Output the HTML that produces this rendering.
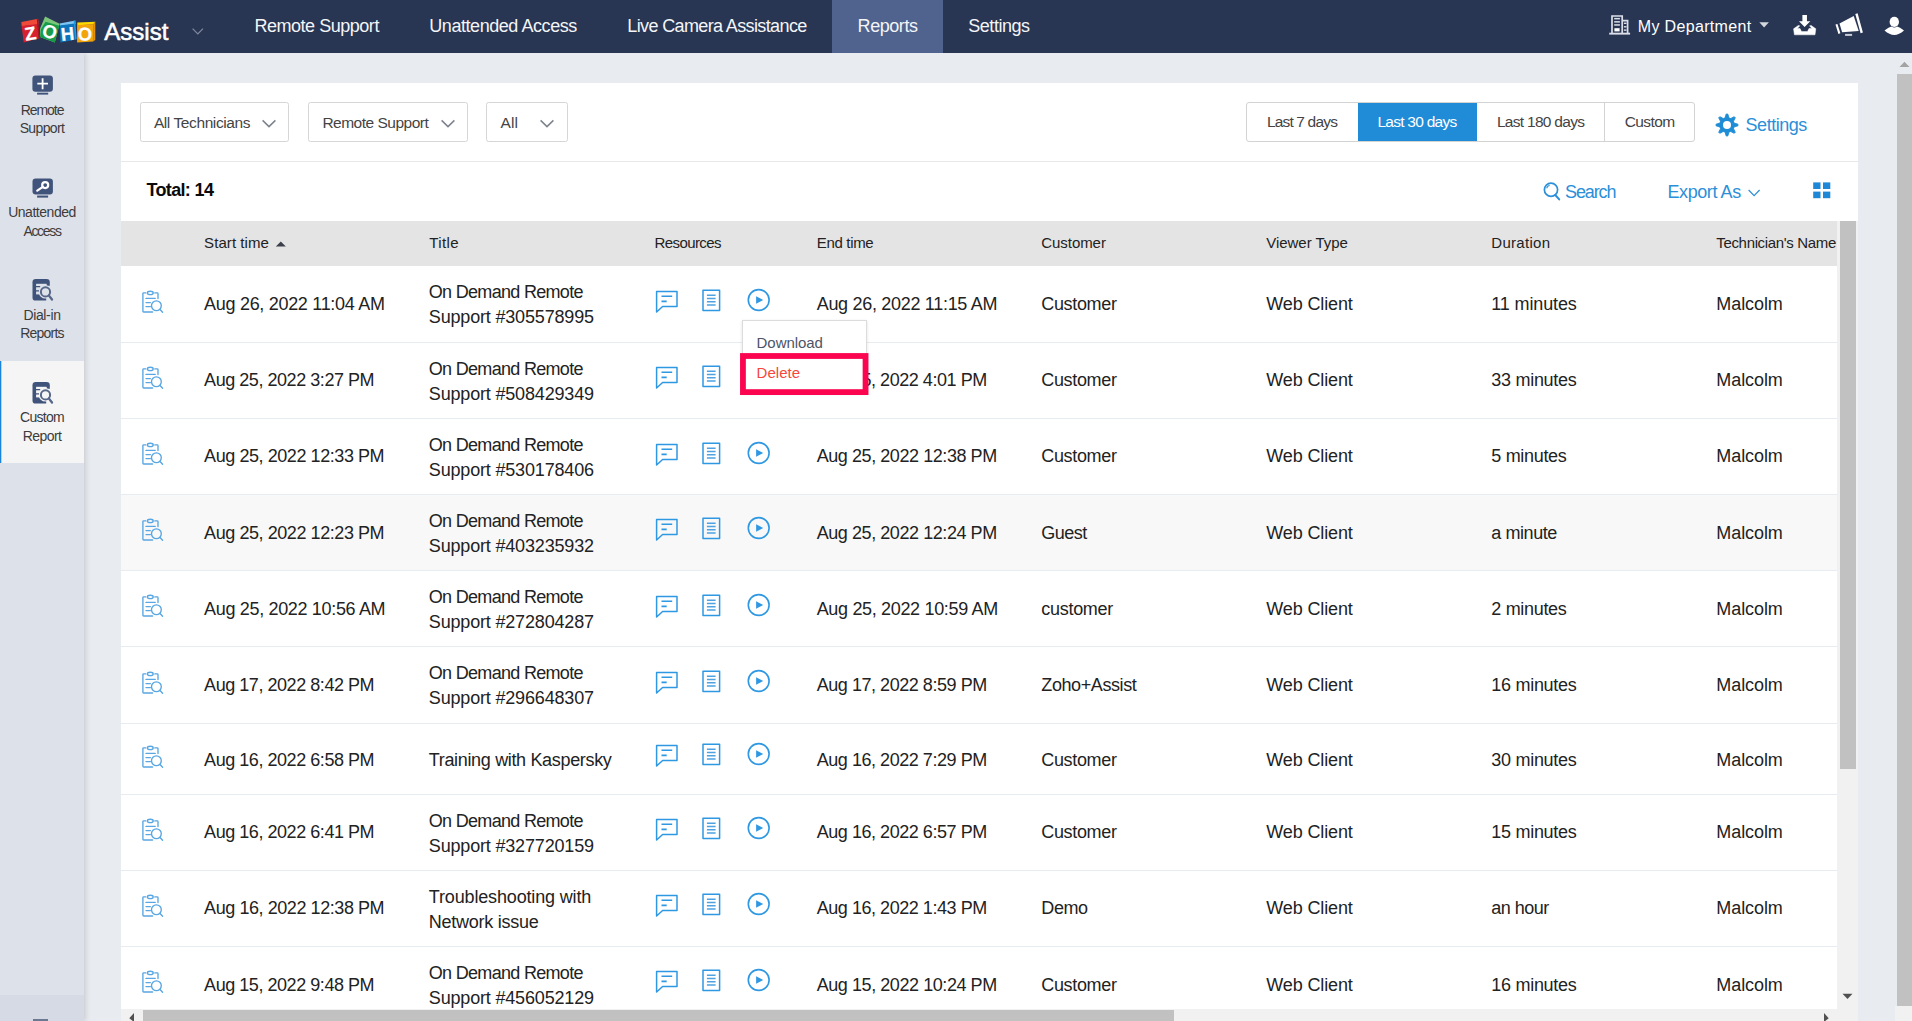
<!DOCTYPE html><html><head><meta charset="utf-8"><title>Zoho Assist - Reports</title><style>
*{box-sizing:border-box;margin:0;padding:0}
html,body{width:1912px;height:1021px;overflow:hidden;background:#e8ebf0;font-family:'Liberation Sans',sans-serif;color:#222}
.abs{position:absolute}
span{white-space:pre}
#nav{position:absolute;left:0;top:0;width:1912px;height:53px;background:#283553;z-index:5}
.ni{position:absolute;top:0;height:53px;line-height:53px;font-size:18px;color:#f4f5f7;white-space:nowrap}
#side{position:absolute;left:0;top:53px;width:84px;height:968px;background:#dde1ea;box-shadow:1px 0 6px rgba(0,0,0,.17);z-index:4}
.si{position:absolute;left:0;width:84px;text-align:center;font-size:14px;line-height:18.5px;color:#333}
.si svg{position:absolute;left:0;top:0}
.sl{position:absolute;left:0;width:84px;text-align:center;white-space:nowrap}
#panel{position:absolute;left:121px;top:83px;width:1737px;height:938px;background:#fff}
.sel{position:absolute;top:102px;height:40px;border:1px solid #d6d6d6;border-radius:2.5px;background:#fff;font-size:15.5px;color:#444;line-height:39px}
.t{position:absolute;white-space:nowrap}
.rng{position:absolute;top:103px;height:40px;line-height:38px;font-size:15.5px;color:#444;text-align:left}
.th{position:absolute;top:220.2px;height:45px;line-height:45px;font-size:15px;color:#222;white-space:nowrap}
.row{position:absolute;left:121px;width:1716px;border-bottom:1px solid #e6ecef;background:#fff}
.c{position:absolute;font-size:18px;line-height:25px;color:#222;white-space:nowrap}
</style></head><body>
<div id="nav">
<svg class="abs" style="left:15px;top:10px" width="90" height="38" viewBox="0 0 90 38">
<polygon points="6.4,12 23.1,8.7 23.6,14.5 6.7,16.3" fill="#ef4a37"/>
<polygon points="6.6,16 22.8,14.1 24.6,28.2 8.7,32.5" fill="#d7202f"/>
<polygon points="21.8,9 23.2,8.7 24.8,28.1 23.4,28.6" fill="#a5141f"/>
<polygon points="30.1,6.6 44.5,13.7 39.8,32.5 25,27.1 25,18.8" fill="#7cc67a"/>
<polygon points="30.6,11.8 44.3,15.7 39.8,32.5 25,27.1 25.9,19.3" fill="#179b48"/>
<polygon points="44.5,13.4 60.3,10.6 60.5,14 45,16" fill="#7cc4f1"/>
<polygon points="44.6,15.6 59.6,13.6 61,29.4 45.5,32.5" fill="#0d74bb"/>
<polygon points="58.7,10.9 60.3,10.6 61.7,29.2 60.2,29.6" fill="#1f9be3"/>
<polygon points="62.3,12.6 80.3,11.8 78.2,14.6 62.3,15.2" fill="#fdd900"/>
<polygon points="62.1,14.9 78.3,14.3 78.3,31.4 62.1,32.5" fill="#f2a40b"/>
<polygon points="78.2,14.3 80.3,11.8 80.3,30.1 78.2,31.5" fill="#e8910d"/>
<g fill="#fff" stroke="#fff" stroke-width="0.25" font-family="'Liberation Sans',sans-serif" font-weight="700" text-anchor="middle">
<text x="15.4" y="29.9" font-size="18.5" transform="rotate(-9 15.4 23.4)">Z</text>
<text x="34.9" y="28.2" font-size="18.5" transform="rotate(17 34.9 21.7)">O</text>
<text x="52.5" y="30.4" font-size="18.5" transform="rotate(-6 52.5 24)">H</text>
<text x="69.9" y="30.4" font-size="18.5" transform="rotate(-2 69.9 24)">O</text>
</g></svg>
<div class="t" style="left:104.2px;top:18.2px;font-size:24px;line-height:28px;color:#fff;-webkit-text-stroke:0.55px #fff"><span style="letter-spacing:0.057px">Assist</span></div>
<svg class="abs" style="left:190px;top:25px" width="16" height="12" viewBox="0 0 16 12"><path d="M2.6 3.6 L7.8 8.9 L13 3.6" fill="none" stroke="#7e879d" stroke-width="1.3"/></svg>
<div class="ni" style="left:254.4px"><span style="letter-spacing:-0.468px">Remote Support</span></div>
<div class="ni" style="left:429.3px"><span style="letter-spacing:-0.444px">Unattended Access</span></div>
<div class="ni" style="left:627.3px"><span style="letter-spacing:-0.624px">Live Camera Assistance</span></div>
<div class="abs" style="left:832px;top:0;width:111px;height:53px;background:#4f638e"></div>
<div class="ni" style="left:857.6px"><span style="letter-spacing:-0.439px">Reports</span></div>
<div class="ni" style="left:968.3px"><span style="letter-spacing:-0.478px">Settings</span></div>
<svg class="abs" style="left:1608px;top:13px" width="24" height="23" viewBox="0 0 24 23">
<g fill="none" stroke="#dcdfe7" stroke-width="1.7"><path d="M4 20.5 V3 H14.2 V20.5"/><path d="M14.6 7.7 H19.6 V20.5"/></g>
<rect x="1.2" y="19.7" width="20.9" height="1.9" fill="#dcdfe7"/>
<g fill="#dcdfe7"><rect x="6.2" y="4.9" width="5.7" height="1.5"/><rect x="6.2" y="8.1" width="5.7" height="1.5"/><rect x="6.2" y="11.2" width="5.7" height="1.5"/><rect x="6.4" y="15.2" width="5.2" height="3.2" fill="#fff"/>
<rect x="15.9" y="9.6" width="2.6" height="1.4"/><rect x="15.9" y="13.1" width="2.6" height="1.4"/><rect x="15.9" y="16.4" width="2.6" height="1.4"/></g></svg><svg class="abs" style="left:1758px;top:21px" width="12" height="8" viewBox="0 0 12 8"><path d="M1.3 1.2 L10.9 1.2 L6.1 6.5 Z" fill="#d3d6dd"/></svg><svg class="abs" style="left:1791px;top:13px" width="28" height="24" viewBox="0 0 28 24"><g fill="#fff">
<path d="M11.4 2.1 H15.95 V8.3 H19.3 L13.6 13.9 L8 8.3 H11.4 Z"/>
<path d="M2.6 15.8 L7.3 12.5 L8.8 12.8 L6.4 15.5 L9 15.5 L10.5 18.6 L16.5 18.6 L18 15.5 L20.8 15.5 L18.6 12.8 L20.2 12.5 L24.8 15.8 L24 21.8 L3.4 21.8 Z" stroke="#fff" stroke-width="0.5" stroke-linejoin="round"/></g></svg><svg class="abs" style="left:1833px;top:11px" width="32" height="27" viewBox="0 0 32 27"><g fill="#fff">
<polygon points="6.5,12.6 20.7,5 25.7,19.9 9.1,21.2"/>
<polygon points="2.5,13.6 4.4,12.9 7.4,22.2 5.4,22.9"/>
<polygon points="22.3,2.9 24.6,2.3 29.9,21.6 27.6,22.2"/></g>
<rect x="12.1" y="22.9" width="7" height="2" fill="#c9cdd8"/></svg><svg class="abs" style="left:1882px;top:14px" width="24" height="23" viewBox="0 0 24 23"><g fill="#fff">
<ellipse cx="12.3" cy="7.9" rx="4.7" ry="5.1"/>
<path d="M2.5 16.6 Q7 13 9.6 12.6 Q12.3 14.4 15 12.6 Q17.6 13 22 16.6 Q17 21 12.3 21 Q7.5 21 2.5 16.6 Z"/></g></svg>
<div class="ni" style="left:1637.8px;top:-0.2px;font-size:16px;color:#fff"><span style="letter-spacing:0.335px">My Department</span></div>
</div>
<div id="side">
<div class="abs" style="left:0;top:308px;width:84px;height:102px;background:#f5f5f5"></div><div class="abs" style="left:0;top:308px;width:1px;height:102px;background:#1a83da"></div><div class="abs" style="left:1px;top:308px;width:1px;height:102px;background:#1a83da;opacity:.3"></div>
<svg class="abs" style="left:30px;top:20px" width="26" height="24" viewBox="0 0 26 24"><rect x="2.4" y="2.4" width="20.5" height="16.3" rx="3" fill="#40547b"/><rect x="7.1" y="19.7" width="11.1" height="1.9" fill="#40547b"/><path d="M7.3 10.6 H18 M12.6 5.3 V16.2" stroke="#fff" stroke-width="1.8"/></svg><svg class="abs" style="left:30px;top:123px" width="26" height="24" viewBox="0 0 26 24"><rect x="2.5" y="2.6" width="20.4" height="15.9" rx="3.2" fill="#40547b"/><rect x="7.1" y="18.5" width="11" height="1.4" fill="#9aa5bb"/><rect x="7.1" y="19.9" width="11" height="1.7" fill="#40547b"/><circle cx="15.2" cy="9.1" r="3" fill="none" stroke="#fff" stroke-width="2.2"/><path d="M12.8 10.9 L7.3 14.6" stroke="#fff" stroke-width="2.3" stroke-linecap="round"/></svg><svg class="abs" style="left:30px;top:224px" width="26" height="26" viewBox="0 0 26 26">
<rect x="2.5" y="2" width="17.3" height="21.6" rx="3.2" fill="#40547b"/>
<rect x="6.1" y="6.8" width="10.6" height="10.6" fill="#dde1ea"/>
<rect x="16.2" y="8.8" width="4" height="16" fill="#dde1ea"/>
<circle cx="15.5" cy="14.9" r="6.7" fill="#dde1ea"/>
<path d="M6 9.7 H10.2 M6 13.8 H9" stroke="#40547b" stroke-width="1.3"/>
<circle cx="15.5" cy="14.9" r="4.6" fill="none" stroke="#566789" stroke-width="2"/>
<path d="M18.8 18.4 L22 22.5" stroke="#566789" stroke-width="2.3" stroke-linecap="round"/></svg><svg class="abs" style="left:30px;top:327px" width="26" height="26" viewBox="0 0 26 26">
<rect x="2.5" y="2" width="17.3" height="21.6" rx="3.2" fill="#40547b"/>
<rect x="6.1" y="6.8" width="10.6" height="10.6" fill="#f5f5f5"/>
<rect x="16.2" y="8.8" width="4" height="16" fill="#f5f5f5"/>
<circle cx="15.5" cy="14.9" r="6.7" fill="#f5f5f5"/>
<path d="M6 9.7 H10.2 M6 13.8 H9" stroke="#40547b" stroke-width="1.3"/>
<circle cx="15.5" cy="14.9" r="4.6" fill="none" stroke="#566789" stroke-width="2"/>
<path d="M18.8 18.4 L22 22.5" stroke="#566789" stroke-width="2.3" stroke-linecap="round"/></svg>
<div class="sl" style="top:48px;font-size:14px;line-height:18px;color:#3c3c3c"><span style="letter-spacing:-1.046px">Remote</span></div>
<div class="sl" style="top:66px;font-size:14px;line-height:18px;color:#3c3c3c"><span style="letter-spacing:-0.624px">Support</span></div>
<div class="sl" style="top:150.1px;font-size:14px;line-height:18px;color:#3c3c3c"><span style="letter-spacing:-0.467px">Unattended</span></div>
<div class="sl" style="top:169.3px;font-size:14px;line-height:18px;color:#3c3c3c"><span style="letter-spacing:-1.325px">Access</span></div>
<div class="sl" style="top:252.89999999999998px;font-size:14px;line-height:18px;color:#3c3c3c"><span style="letter-spacing:-0.365px">Dial-in</span></div>
<div class="sl" style="top:271px;font-size:14px;line-height:18px;color:#3c3c3c"><span style="letter-spacing:-0.755px">Reports</span></div>
<div class="sl" style="top:354.7px;font-size:14px;line-height:18px;color:#3c3c3c"><span style="letter-spacing:-0.727px">Custom</span></div>
<div class="sl" style="top:374.1px;font-size:14px;line-height:18px;color:#3c3c3c"><span style="letter-spacing:-0.566px">Report</span></div>
<div class="abs" style="left:0;top:942px;width:84px;height:26px;background:#d6dae4"></div><div class="abs" style="left:33px;top:966px;width:15px;height:2px;background:#6c7892"></div>
</div>
<div id="panel"></div>
<div class="sel" style="left:140px;width:149px"><span class="t" style="left:12.9px"><span style="letter-spacing:-0.404px">All Technicians</span></span></div><svg class="abs" style="left:261.3px;top:118.2px" width="16" height="11" viewBox="0 0 16 11"><path d="M1.6 2.4 L8 8.6 L14.4 2.4" fill="none" stroke="#7d828c" stroke-width="1.5"/></svg>
<div class="sel" style="left:308px;width:160px"><span class="t" style="left:13.4px"><span style="letter-spacing:-0.498px">Remote Support</span></span></div><svg class="abs" style="left:439.6px;top:118.2px" width="16" height="11" viewBox="0 0 16 11"><path d="M1.6 2.4 L8 8.6 L14.4 2.4" fill="none" stroke="#7d828c" stroke-width="1.5"/></svg>
<div class="sel" style="left:486px;width:82px"><span class="t" style="left:13.4px"><span style="letter-spacing:0.183px">All</span></span></div><svg class="abs" style="left:539.3px;top:118.2px" width="16" height="11" viewBox="0 0 16 11"><path d="M1.6 2.4 L8 8.6 L14.4 2.4" fill="none" stroke="#7d828c" stroke-width="1.5"/></svg>
<div class="abs" style="left:1246px;top:102px;width:449px;height:40px;border:1px solid #d3d3d3;border-radius:3px;background:#fff"></div>
<div class="abs" style="left:1357.5px;top:103px;width:119px;height:38px;background:#208cd7"></div>
<div class="abs" style="left:1604px;top:103px;width:1px;height:38px;background:#d3d3d3"></div>
<div class="rng" style="left:1266.9px;color:#444"><span style="letter-spacing:-0.828px">Last 7 days</span></div>
<div class="rng" style="left:1377.4px;color:#fff"><span style="letter-spacing:-0.737px">Last 30 days</span></div>
<div class="rng" style="left:1496.9px;color:#444"><span style="letter-spacing:-0.701px">Last 180 days</span></div>
<div class="rng" style="left:1624.7px;color:#444"><span style="letter-spacing:-0.601px">Custom</span></div>
<svg class="abs" style="left:1714.6px;top:112.9px" width="24" height="24" viewBox="0 0 24 24"><path d="M9.94 5.10 L11.23 1.03 L12.77 1.03 L14.06 5.10 L15.42 5.67 L19.22 3.70 L20.30 4.78 L18.33 8.58 L18.90 9.94 L22.97 11.23 L22.97 12.77 L18.90 14.06 L18.33 15.42 L20.30 19.22 L19.22 20.30 L15.42 18.33 L14.06 18.90 L12.77 22.97 L11.23 22.97 L9.94 18.90 L8.58 18.33 L4.78 20.30 L3.70 19.22 L5.67 15.42 L5.10 14.06 L1.03 12.77 L1.03 11.23 L5.10 9.94 L5.67 8.58 L3.70 4.78 L4.78 3.70 L8.58 5.67 Z" fill="#1f8dd6" stroke="#1f8dd6" stroke-width="0.9" stroke-linejoin="round"/><circle cx="12" cy="12" r="7.6" fill="#1f8dd6"/><circle cx="12" cy="12" r="4.0" fill="#fff"/></svg>
<div class="t" style="left:1745.6px;top:111.6px;font-size:18px;line-height:26px;color:#2b8fd9"><span style="letter-spacing:-0.478px">Settings</span></div>
<div class="abs" style="left:121px;top:161px;width:1737px;height:1px;background:#e8e8e8"></div>
<div class="t" style="left:146.5px;top:177px;font-size:18px;line-height:26px;color:#0a0a0a;font-weight:700"><span style="letter-spacing:-0.661px">Total: 14</span></div>
<svg class="abs" style="left:1541px;top:180px" width="22" height="22" viewBox="0 0 22 22"><circle cx="10" cy="9.8" r="6.6" fill="none" stroke="#2b8fd9" stroke-width="1.7"/><path d="M14.3 15 L18.2 19.4" stroke="#2b8fd9" stroke-width="2" stroke-linecap="round"/><path d="M5.6 8.2 A4.6 4.6 0 0 1 8.6 5.3" fill="none" stroke="#2b8fd9" stroke-width="1.1"/></svg>
<div class="t" style="left:1565px;top:178.6px;font-size:18px;line-height:26px;color:#2b8fd9"><span style="letter-spacing:-1.129px">Search</span></div>
<div class="t" style="left:1667.5px;top:178.6px;font-size:18px;line-height:26px;color:#2b8fd9"><span style="letter-spacing:-0.418px">Export As</span></div>
<svg class="abs" style="left:1746px;top:187px" width="16" height="12" viewBox="0 0 16 12"><path d="M2.6 3 L8.1 8.7 L13.6 3" fill="none" stroke="#2b8fd9" stroke-width="1.2"/></svg>
<svg class="abs" style="left:1813px;top:182px" width="18" height="17" viewBox="0 0 18 17"><g fill="#1f88d6"><rect x="0.2" y="0.4" width="7.3" height="6.6"/><rect x="10" y="0.4" width="7.3" height="6.6"/><rect x="0.2" y="9.6" width="7.3" height="6.6"/><rect x="10" y="9.6" width="7.3" height="6.6"/></g></svg>
<div class="abs" style="left:121px;top:221px;width:1716px;height:45px;background:#e4e4e4"></div>
<div class="th" style="left:204.1px"><span style="letter-spacing:0.068px">Start time</span></div>
<div class="th" style="left:429.3px"><span style="letter-spacing:0.355px">Title</span></div>
<div class="th" style="left:654.5px"><span style="letter-spacing:-0.588px">Resources</span></div>
<div class="th" style="left:816.7px"><span style="letter-spacing:-0.315px">End time</span></div>
<div class="th" style="left:1041.3px"><span style="letter-spacing:-0.062px">Customer</span></div>
<div class="th" style="left:1266.3px"><span style="letter-spacing:-0.050px">Viewer Type</span></div>
<div class="th" style="left:1491.3px"><span style="letter-spacing:0.285px">Duration</span></div>
<div class="th" style="left:1716.3px"><span style="letter-spacing:-0.339px">Technician&#x27;s Name</span></div>
<svg class="abs" style="left:275px;top:240px" width="12" height="8" viewBox="0 0 12 8"><path d="M0.8 6.6 L5.8 1.4 L10.8 6.6 Z" fill="#3a3f4a"/></svg>
<div class="abs" style="left:1837px;top:221px;width:21px;height:45px;background:#fff"></div>
<div class="row" style="top:266px;height:77px;background:#fff">
<svg class="abs" style="left:19.0px;top:23.9px" width="26" height="25" viewBox="0 0 26 25"><g fill="none" stroke="#58a6e2" stroke-width="1.35" stroke-linecap="round" stroke-linejoin="round">
<path d="M5.8 2.9 H3.6 Q2.9 2.9 2.9 3.6 V21.3 Q2.9 22 3.6 22 H12.6"/><path d="M14.8 2.9 H17.2 Q18 2.9 18 3.7 V8.6"/>
<ellipse cx="10.3" cy="2.9" rx="2.9" ry="1.7"/>
<path d="M6 8.4 H15.2 M6 12.6 H10.4 M6 16.6 H10.4"/>
<circle cx="16.4" cy="15.7" r="4.9"/><path d="M20 19.5 L22.6 22.3"/></g></svg>
<div class="c" style="left:83.1px;top:26.0px"><span style="letter-spacing:-0.301px">Aug 26, 2022 11:04 AM</span></div>
<div class="c" style="left:307.8px;top:14px"><span style="letter-spacing:-0.692px">On Demand Remote</span></div>
<div class="c" style="left:307.8px;top:39px"><span style="letter-spacing:-0.174px">Support #305578995</span></div>
<svg class="abs" style="left:532px;top:21.0px" width="120" height="30" viewBox="0 0 120 30"><g fill="none" stroke="#2f98e3" stroke-width="1.5" stroke-linejoin="round">
<path d="M3.6 4.4 H24 V19.5 H9.6 L3.6 25 Z"/><path d="M8.5 9.3 H19.2 M8.5 14.4 H13.7" stroke-width="1.6"/>
<rect x="50" y="3.2" width="16.6" height="20.3"/><path d="M53.9 8.2 H62.6 M53.9 11.4 H62.6 M53.9 14.7 H62.6 M53.9 17.9 H62.6" stroke-width="1.5" stroke="#4ea2e0"/><circle cx="105.7" cy="13" r="10.4" stroke-width="1.6"/><path d="M103.1 9.3 L110.2 13 L103.1 16.8 Z" fill="#2f98e3" stroke="none"/></g></svg>
<div class="c" style="left:695.7px;top:26.0px"><span style="letter-spacing:-0.301px">Aug 26, 2022 11:15 AM</span></div>
<div class="c" style="left:920.3px;top:26.0px"><span style="letter-spacing:-0.347px">Customer</span></div>
<div class="c" style="left:1145.3px;top:26.0px"><span style="letter-spacing:-0.135px">Web Client</span></div>
<div class="c" style="left:1370.3px;top:26.0px"><span style="letter-spacing:-0.135px">11 minutes</span></div>
<div class="c" style="left:1595.3px;top:26.0px"><span style="letter-spacing:-0.086px">Malcolm</span></div>
</div>
<div class="row" style="top:343px;height:76px;background:#fff">
<svg class="abs" style="left:19.0px;top:23.4px" width="26" height="25" viewBox="0 0 26 25"><g fill="none" stroke="#58a6e2" stroke-width="1.35" stroke-linecap="round" stroke-linejoin="round">
<path d="M5.8 2.9 H3.6 Q2.9 2.9 2.9 3.6 V21.3 Q2.9 22 3.6 22 H12.6"/><path d="M14.8 2.9 H17.2 Q18 2.9 18 3.7 V8.6"/>
<ellipse cx="10.3" cy="2.9" rx="2.9" ry="1.7"/>
<path d="M6 8.4 H15.2 M6 12.6 H10.4 M6 16.6 H10.4"/>
<circle cx="16.4" cy="15.7" r="4.9"/><path d="M20 19.5 L22.6 22.3"/></g></svg>
<div class="c" style="left:83.1px;top:25.0px"><span style="letter-spacing:-0.455px">Aug 25, 2022 3:27 PM</span></div>
<div class="c" style="left:307.8px;top:14px"><span style="letter-spacing:-0.692px">On Demand Remote</span></div>
<div class="c" style="left:307.8px;top:39px"><span style="letter-spacing:-0.174px">Support #508429349</span></div>
<svg class="abs" style="left:532px;top:19.5px" width="120" height="30" viewBox="0 0 120 30"><g fill="none" stroke="#2f98e3" stroke-width="1.5" stroke-linejoin="round">
<path d="M3.6 4.4 H24 V19.5 H9.6 L3.6 25 Z"/><path d="M8.5 9.3 H19.2 M8.5 14.4 H13.7" stroke-width="1.6"/>
<rect x="50" y="3.2" width="16.6" height="20.3"/><path d="M53.9 8.2 H62.6 M53.9 11.4 H62.6 M53.9 14.7 H62.6 M53.9 17.9 H62.6" stroke-width="1.5" stroke="#4ea2e0"/></g></svg>
<div class="c" style="left:695.7px;top:25.0px"><span style="letter-spacing:-0.455px">Aug 25, 2022 4:01 PM</span></div>
<div class="c" style="left:920.3px;top:25.0px"><span style="letter-spacing:-0.347px">Customer</span></div>
<div class="c" style="left:1145.3px;top:25.0px"><span style="letter-spacing:-0.135px">Web Client</span></div>
<div class="c" style="left:1370.3px;top:25.0px"><span style="letter-spacing:-0.285px">33 minutes</span></div>
<div class="c" style="left:1595.3px;top:25.0px"><span style="letter-spacing:-0.086px">Malcolm</span></div>
</div>
<div class="row" style="top:419px;height:76px;background:#fff">
<svg class="abs" style="left:19.0px;top:23.4px" width="26" height="25" viewBox="0 0 26 25"><g fill="none" stroke="#58a6e2" stroke-width="1.35" stroke-linecap="round" stroke-linejoin="round">
<path d="M5.8 2.9 H3.6 Q2.9 2.9 2.9 3.6 V21.3 Q2.9 22 3.6 22 H12.6"/><path d="M14.8 2.9 H17.2 Q18 2.9 18 3.7 V8.6"/>
<ellipse cx="10.3" cy="2.9" rx="2.9" ry="1.7"/>
<path d="M6 8.4 H15.2 M6 12.6 H10.4 M6 16.6 H10.4"/>
<circle cx="16.4" cy="15.7" r="4.9"/><path d="M20 19.5 L22.6 22.3"/></g></svg>
<div class="c" style="left:83.1px;top:25.0px"><span style="letter-spacing:-0.432px">Aug 25, 2022 12:33 PM</span></div>
<div class="c" style="left:307.8px;top:14px"><span style="letter-spacing:-0.692px">On Demand Remote</span></div>
<div class="c" style="left:307.8px;top:39px"><span style="letter-spacing:-0.174px">Support #530178406</span></div>
<svg class="abs" style="left:532px;top:20.5px" width="120" height="30" viewBox="0 0 120 30"><g fill="none" stroke="#2f98e3" stroke-width="1.5" stroke-linejoin="round">
<path d="M3.6 4.4 H24 V19.5 H9.6 L3.6 25 Z"/><path d="M8.5 9.3 H19.2 M8.5 14.4 H13.7" stroke-width="1.6"/>
<rect x="50" y="3.2" width="16.6" height="20.3"/><path d="M53.9 8.2 H62.6 M53.9 11.4 H62.6 M53.9 14.7 H62.6 M53.9 17.9 H62.6" stroke-width="1.5" stroke="#4ea2e0"/><circle cx="105.7" cy="13" r="10.4" stroke-width="1.6"/><path d="M103.1 9.3 L110.2 13 L103.1 16.8 Z" fill="#2f98e3" stroke="none"/></g></svg>
<div class="c" style="left:695.7px;top:25.0px"><span style="letter-spacing:-0.432px">Aug 25, 2022 12:38 PM</span></div>
<div class="c" style="left:920.3px;top:25.0px"><span style="letter-spacing:-0.347px">Customer</span></div>
<div class="c" style="left:1145.3px;top:25.0px"><span style="letter-spacing:-0.135px">Web Client</span></div>
<div class="c" style="left:1370.3px;top:25.0px"><span style="letter-spacing:-0.318px">5 minutes</span></div>
<div class="c" style="left:1595.3px;top:25.0px"><span style="letter-spacing:-0.086px">Malcolm</span></div>
</div>
<div class="row" style="top:495px;height:76px;background:#f8f8f8">
<svg class="abs" style="left:19.0px;top:23.4px" width="26" height="25" viewBox="0 0 26 25"><g fill="none" stroke="#58a6e2" stroke-width="1.35" stroke-linecap="round" stroke-linejoin="round">
<path d="M5.8 2.9 H3.6 Q2.9 2.9 2.9 3.6 V21.3 Q2.9 22 3.6 22 H12.6"/><path d="M14.8 2.9 H17.2 Q18 2.9 18 3.7 V8.6"/>
<ellipse cx="10.3" cy="2.9" rx="2.9" ry="1.7"/>
<path d="M6 8.4 H15.2 M6 12.6 H10.4 M6 16.6 H10.4"/>
<circle cx="16.4" cy="15.7" r="4.9"/><path d="M20 19.5 L22.6 22.3"/></g></svg>
<div class="c" style="left:83.1px;top:26.0px"><span style="letter-spacing:-0.432px">Aug 25, 2022 12:23 PM</span></div>
<div class="c" style="left:307.8px;top:14px"><span style="letter-spacing:-0.692px">On Demand Remote</span></div>
<div class="c" style="left:307.8px;top:39px"><span style="letter-spacing:-0.174px">Support #403235932</span></div>
<svg class="abs" style="left:532px;top:19.5px" width="120" height="30" viewBox="0 0 120 30"><g fill="none" stroke="#2f98e3" stroke-width="1.5" stroke-linejoin="round">
<path d="M3.6 4.4 H24 V19.5 H9.6 L3.6 25 Z"/><path d="M8.5 9.3 H19.2 M8.5 14.4 H13.7" stroke-width="1.6"/>
<rect x="50" y="3.2" width="16.6" height="20.3"/><path d="M53.9 8.2 H62.6 M53.9 11.4 H62.6 M53.9 14.7 H62.6 M53.9 17.9 H62.6" stroke-width="1.5" stroke="#4ea2e0"/><circle cx="105.7" cy="13" r="10.4" stroke-width="1.6"/><path d="M103.1 9.3 L110.2 13 L103.1 16.8 Z" fill="#2f98e3" stroke="none"/></g></svg>
<div class="c" style="left:695.7px;top:26.0px"><span style="letter-spacing:-0.432px">Aug 25, 2022 12:24 PM</span></div>
<div class="c" style="left:920.3px;top:26.0px"><span style="letter-spacing:-0.508px">Guest</span></div>
<div class="c" style="left:1145.3px;top:26.0px"><span style="letter-spacing:-0.135px">Web Client</span></div>
<div class="c" style="left:1370.3px;top:26.0px"><span style="letter-spacing:-0.435px">a minute</span></div>
<div class="c" style="left:1595.3px;top:26.0px"><span style="letter-spacing:-0.086px">Malcolm</span></div>
</div>
<div class="row" style="top:571px;height:76px;background:#fff">
<svg class="abs" style="left:19.0px;top:23.4px" width="26" height="25" viewBox="0 0 26 25"><g fill="none" stroke="#58a6e2" stroke-width="1.35" stroke-linecap="round" stroke-linejoin="round">
<path d="M5.8 2.9 H3.6 Q2.9 2.9 2.9 3.6 V21.3 Q2.9 22 3.6 22 H12.6"/><path d="M14.8 2.9 H17.2 Q18 2.9 18 3.7 V8.6"/>
<ellipse cx="10.3" cy="2.9" rx="2.9" ry="1.7"/>
<path d="M6 8.4 H15.2 M6 12.6 H10.4 M6 16.6 H10.4"/>
<circle cx="16.4" cy="15.7" r="4.9"/><path d="M20 19.5 L22.6 22.3"/></g></svg>
<div class="c" style="left:83.1px;top:26.3px"><span style="letter-spacing:-0.333px">Aug 25, 2022 10:56 AM</span></div>
<div class="c" style="left:307.8px;top:14px"><span style="letter-spacing:-0.692px">On Demand Remote</span></div>
<div class="c" style="left:307.8px;top:39px"><span style="letter-spacing:-0.174px">Support #272804287</span></div>
<svg class="abs" style="left:532px;top:20.5px" width="120" height="30" viewBox="0 0 120 30"><g fill="none" stroke="#2f98e3" stroke-width="1.5" stroke-linejoin="round">
<path d="M3.6 4.4 H24 V19.5 H9.6 L3.6 25 Z"/><path d="M8.5 9.3 H19.2 M8.5 14.4 H13.7" stroke-width="1.6"/>
<rect x="50" y="3.2" width="16.6" height="20.3"/><path d="M53.9 8.2 H62.6 M53.9 11.4 H62.6 M53.9 14.7 H62.6 M53.9 17.9 H62.6" stroke-width="1.5" stroke="#4ea2e0"/><circle cx="105.7" cy="13" r="10.4" stroke-width="1.6"/><path d="M103.1 9.3 L110.2 13 L103.1 16.8 Z" fill="#2f98e3" stroke="none"/></g></svg>
<div class="c" style="left:695.7px;top:26.3px"><span style="letter-spacing:-0.333px">Aug 25, 2022 10:59 AM</span></div>
<div class="c" style="left:920.3px;top:26.3px"><span style="letter-spacing:-0.290px">customer</span></div>
<div class="c" style="left:1145.3px;top:26.3px"><span style="letter-spacing:-0.135px">Web Client</span></div>
<div class="c" style="left:1370.3px;top:26.3px"><span style="letter-spacing:-0.318px">2 minutes</span></div>
<div class="c" style="left:1595.3px;top:26.3px"><span style="letter-spacing:-0.086px">Malcolm</span></div>
</div>
<div class="row" style="top:647px;height:77px;background:#fff">
<svg class="abs" style="left:19.0px;top:23.9px" width="26" height="25" viewBox="0 0 26 25"><g fill="none" stroke="#58a6e2" stroke-width="1.35" stroke-linecap="round" stroke-linejoin="round">
<path d="M5.8 2.9 H3.6 Q2.9 2.9 2.9 3.6 V21.3 Q2.9 22 3.6 22 H12.6"/><path d="M14.8 2.9 H17.2 Q18 2.9 18 3.7 V8.6"/>
<ellipse cx="10.3" cy="2.9" rx="2.9" ry="1.7"/>
<path d="M6 8.4 H15.2 M6 12.6 H10.4 M6 16.6 H10.4"/>
<circle cx="16.4" cy="15.7" r="4.9"/><path d="M20 19.5 L22.6 22.3"/></g></svg>
<div class="c" style="left:83.1px;top:26.3px"><span style="letter-spacing:-0.455px">Aug 17, 2022 8:42 PM</span></div>
<div class="c" style="left:307.8px;top:14px"><span style="letter-spacing:-0.692px">On Demand Remote</span></div>
<div class="c" style="left:307.8px;top:39px"><span style="letter-spacing:-0.174px">Support #296648307</span></div>
<svg class="abs" style="left:532px;top:21.0px" width="120" height="30" viewBox="0 0 120 30"><g fill="none" stroke="#2f98e3" stroke-width="1.5" stroke-linejoin="round">
<path d="M3.6 4.4 H24 V19.5 H9.6 L3.6 25 Z"/><path d="M8.5 9.3 H19.2 M8.5 14.4 H13.7" stroke-width="1.6"/>
<rect x="50" y="3.2" width="16.6" height="20.3"/><path d="M53.9 8.2 H62.6 M53.9 11.4 H62.6 M53.9 14.7 H62.6 M53.9 17.9 H62.6" stroke-width="1.5" stroke="#4ea2e0"/><circle cx="105.7" cy="13" r="10.4" stroke-width="1.6"/><path d="M103.1 9.3 L110.2 13 L103.1 16.8 Z" fill="#2f98e3" stroke="none"/></g></svg>
<div class="c" style="left:695.7px;top:26.3px"><span style="letter-spacing:-0.455px">Aug 17, 2022 8:59 PM</span></div>
<div class="c" style="left:920.3px;top:26.3px"><span style="letter-spacing:-0.405px">Zoho+Assist</span></div>
<div class="c" style="left:1145.3px;top:26.3px"><span style="letter-spacing:-0.135px">Web Client</span></div>
<div class="c" style="left:1370.3px;top:26.3px"><span style="letter-spacing:-0.285px">16 minutes</span></div>
<div class="c" style="left:1595.3px;top:26.3px"><span style="letter-spacing:-0.086px">Malcolm</span></div>
</div>
<div class="row" style="top:724px;height:71px;background:#fff">
<svg class="abs" style="left:19.0px;top:20.9px" width="26" height="25" viewBox="0 0 26 25"><g fill="none" stroke="#58a6e2" stroke-width="1.35" stroke-linecap="round" stroke-linejoin="round">
<path d="M5.8 2.9 H3.6 Q2.9 2.9 2.9 3.6 V21.3 Q2.9 22 3.6 22 H12.6"/><path d="M14.8 2.9 H17.2 Q18 2.9 18 3.7 V8.6"/>
<ellipse cx="10.3" cy="2.9" rx="2.9" ry="1.7"/>
<path d="M6 8.4 H15.2 M6 12.6 H10.4 M6 16.6 H10.4"/>
<circle cx="16.4" cy="15.7" r="4.9"/><path d="M20 19.5 L22.6 22.3"/></g></svg>
<div class="c" style="left:83.1px;top:23.6px"><span style="letter-spacing:-0.455px">Aug 16, 2022 6:58 PM</span></div>
<div class="c" style="left:307.8px;top:23.6px"><span style="letter-spacing:-0.337px">Training with Kaspersky</span></div>
<svg class="abs" style="left:532px;top:17.0px" width="120" height="30" viewBox="0 0 120 30"><g fill="none" stroke="#2f98e3" stroke-width="1.5" stroke-linejoin="round">
<path d="M3.6 4.4 H24 V19.5 H9.6 L3.6 25 Z"/><path d="M8.5 9.3 H19.2 M8.5 14.4 H13.7" stroke-width="1.6"/>
<rect x="50" y="3.2" width="16.6" height="20.3"/><path d="M53.9 8.2 H62.6 M53.9 11.4 H62.6 M53.9 14.7 H62.6 M53.9 17.9 H62.6" stroke-width="1.5" stroke="#4ea2e0"/><circle cx="105.7" cy="13" r="10.4" stroke-width="1.6"/><path d="M103.1 9.3 L110.2 13 L103.1 16.8 Z" fill="#2f98e3" stroke="none"/></g></svg>
<div class="c" style="left:695.7px;top:23.6px"><span style="letter-spacing:-0.455px">Aug 16, 2022 7:29 PM</span></div>
<div class="c" style="left:920.3px;top:23.6px"><span style="letter-spacing:-0.347px">Customer</span></div>
<div class="c" style="left:1145.3px;top:23.6px"><span style="letter-spacing:-0.135px">Web Client</span></div>
<div class="c" style="left:1370.3px;top:23.6px"><span style="letter-spacing:-0.285px">30 minutes</span></div>
<div class="c" style="left:1595.3px;top:23.6px"><span style="letter-spacing:-0.086px">Malcolm</span></div>
</div>
<div class="row" style="top:795px;height:76px;background:#fff">
<svg class="abs" style="left:19.0px;top:23.4px" width="26" height="25" viewBox="0 0 26 25"><g fill="none" stroke="#58a6e2" stroke-width="1.35" stroke-linecap="round" stroke-linejoin="round">
<path d="M5.8 2.9 H3.6 Q2.9 2.9 2.9 3.6 V21.3 Q2.9 22 3.6 22 H12.6"/><path d="M14.8 2.9 H17.2 Q18 2.9 18 3.7 V8.6"/>
<ellipse cx="10.3" cy="2.9" rx="2.9" ry="1.7"/>
<path d="M6 8.4 H15.2 M6 12.6 H10.4 M6 16.6 H10.4"/>
<circle cx="16.4" cy="15.7" r="4.9"/><path d="M20 19.5 L22.6 22.3"/></g></svg>
<div class="c" style="left:83.1px;top:24.9px"><span style="letter-spacing:-0.455px">Aug 16, 2022 6:41 PM</span></div>
<div class="c" style="left:307.8px;top:14px"><span style="letter-spacing:-0.692px">On Demand Remote</span></div>
<div class="c" style="left:307.8px;top:39px"><span style="letter-spacing:-0.174px">Support #327720159</span></div>
<svg class="abs" style="left:532px;top:19.5px" width="120" height="30" viewBox="0 0 120 30"><g fill="none" stroke="#2f98e3" stroke-width="1.5" stroke-linejoin="round">
<path d="M3.6 4.4 H24 V19.5 H9.6 L3.6 25 Z"/><path d="M8.5 9.3 H19.2 M8.5 14.4 H13.7" stroke-width="1.6"/>
<rect x="50" y="3.2" width="16.6" height="20.3"/><path d="M53.9 8.2 H62.6 M53.9 11.4 H62.6 M53.9 14.7 H62.6 M53.9 17.9 H62.6" stroke-width="1.5" stroke="#4ea2e0"/><circle cx="105.7" cy="13" r="10.4" stroke-width="1.6"/><path d="M103.1 9.3 L110.2 13 L103.1 16.8 Z" fill="#2f98e3" stroke="none"/></g></svg>
<div class="c" style="left:695.7px;top:24.9px"><span style="letter-spacing:-0.455px">Aug 16, 2022 6:57 PM</span></div>
<div class="c" style="left:920.3px;top:24.9px"><span style="letter-spacing:-0.347px">Customer</span></div>
<div class="c" style="left:1145.3px;top:24.9px"><span style="letter-spacing:-0.135px">Web Client</span></div>
<div class="c" style="left:1370.3px;top:24.9px"><span style="letter-spacing:-0.285px">15 minutes</span></div>
<div class="c" style="left:1595.3px;top:24.9px"><span style="letter-spacing:-0.086px">Malcolm</span></div>
</div>
<div class="row" style="top:871px;height:76px;background:#fff">
<svg class="abs" style="left:19.0px;top:23.4px" width="26" height="25" viewBox="0 0 26 25"><g fill="none" stroke="#58a6e2" stroke-width="1.35" stroke-linecap="round" stroke-linejoin="round">
<path d="M5.8 2.9 H3.6 Q2.9 2.9 2.9 3.6 V21.3 Q2.9 22 3.6 22 H12.6"/><path d="M14.8 2.9 H17.2 Q18 2.9 18 3.7 V8.6"/>
<ellipse cx="10.3" cy="2.9" rx="2.9" ry="1.7"/>
<path d="M6 8.4 H15.2 M6 12.6 H10.4 M6 16.6 H10.4"/>
<circle cx="16.4" cy="15.7" r="4.9"/><path d="M20 19.5 L22.6 22.3"/></g></svg>
<div class="c" style="left:83.1px;top:24.9px"><span style="letter-spacing:-0.432px">Aug 16, 2022 12:38 PM</span></div>
<div class="c" style="left:307.8px;top:14px"><span style="letter-spacing:-0.155px">Troubleshooting with</span></div>
<div class="c" style="left:307.8px;top:39px"><span style="letter-spacing:-0.254px">Network issue</span></div>
<svg class="abs" style="left:532px;top:19.5px" width="120" height="30" viewBox="0 0 120 30"><g fill="none" stroke="#2f98e3" stroke-width="1.5" stroke-linejoin="round">
<path d="M3.6 4.4 H24 V19.5 H9.6 L3.6 25 Z"/><path d="M8.5 9.3 H19.2 M8.5 14.4 H13.7" stroke-width="1.6"/>
<rect x="50" y="3.2" width="16.6" height="20.3"/><path d="M53.9 8.2 H62.6 M53.9 11.4 H62.6 M53.9 14.7 H62.6 M53.9 17.9 H62.6" stroke-width="1.5" stroke="#4ea2e0"/><circle cx="105.7" cy="13" r="10.4" stroke-width="1.6"/><path d="M103.1 9.3 L110.2 13 L103.1 16.8 Z" fill="#2f98e3" stroke="none"/></g></svg>
<div class="c" style="left:695.7px;top:24.9px"><span style="letter-spacing:-0.455px">Aug 16, 2022 1:43 PM</span></div>
<div class="c" style="left:920.3px;top:24.9px"><span style="letter-spacing:-0.405px">Demo</span></div>
<div class="c" style="left:1145.3px;top:24.9px"><span style="letter-spacing:-0.135px">Web Client</span></div>
<div class="c" style="left:1370.3px;top:24.9px"><span style="letter-spacing:-0.510px">an hour</span></div>
<div class="c" style="left:1595.3px;top:24.9px"><span style="letter-spacing:-0.086px">Malcolm</span></div>
</div>
<div class="row" style="top:947px;height:76px;background:#fff">
<svg class="abs" style="left:19.0px;top:23.4px" width="26" height="25" viewBox="0 0 26 25"><g fill="none" stroke="#58a6e2" stroke-width="1.35" stroke-linecap="round" stroke-linejoin="round">
<path d="M5.8 2.9 H3.6 Q2.9 2.9 2.9 3.6 V21.3 Q2.9 22 3.6 22 H12.6"/><path d="M14.8 2.9 H17.2 Q18 2.9 18 3.7 V8.6"/>
<ellipse cx="10.3" cy="2.9" rx="2.9" ry="1.7"/>
<path d="M6 8.4 H15.2 M6 12.6 H10.4 M6 16.6 H10.4"/>
<circle cx="16.4" cy="15.7" r="4.9"/><path d="M20 19.5 L22.6 22.3"/></g></svg>
<div class="c" style="left:83.1px;top:26.1px"><span style="letter-spacing:-0.455px">Aug 15, 2022 9:48 PM</span></div>
<div class="c" style="left:307.8px;top:14px"><span style="letter-spacing:-0.692px">On Demand Remote</span></div>
<div class="c" style="left:307.8px;top:39px"><span style="letter-spacing:-0.174px">Support #456052129</span></div>
<svg class="abs" style="left:532px;top:19.5px" width="120" height="30" viewBox="0 0 120 30"><g fill="none" stroke="#2f98e3" stroke-width="1.5" stroke-linejoin="round">
<path d="M3.6 4.4 H24 V19.5 H9.6 L3.6 25 Z"/><path d="M8.5 9.3 H19.2 M8.5 14.4 H13.7" stroke-width="1.6"/>
<rect x="50" y="3.2" width="16.6" height="20.3"/><path d="M53.9 8.2 H62.6 M53.9 11.4 H62.6 M53.9 14.7 H62.6 M53.9 17.9 H62.6" stroke-width="1.5" stroke="#4ea2e0"/><circle cx="105.7" cy="13" r="10.4" stroke-width="1.6"/><path d="M103.1 9.3 L110.2 13 L103.1 16.8 Z" fill="#2f98e3" stroke="none"/></g></svg>
<div class="c" style="left:695.7px;top:26.1px"><span style="letter-spacing:-0.432px">Aug 15, 2022 10:24 PM</span></div>
<div class="c" style="left:920.3px;top:26.1px"><span style="letter-spacing:-0.347px">Customer</span></div>
<div class="c" style="left:1145.3px;top:26.1px"><span style="letter-spacing:-0.135px">Web Client</span></div>
<div class="c" style="left:1370.3px;top:26.1px"><span style="letter-spacing:-0.285px">16 minutes</span></div>
<div class="c" style="left:1595.3px;top:26.1px"><span style="letter-spacing:-0.086px">Malcolm</span></div>
</div>
<div class="abs" style="left:742px;top:320px;width:125px;height:73px;background:#fff;border:1px solid #dcdcdc;box-shadow:0 1px 3px rgba(0,0,0,.12)"></div>
<div class="t" style="left:756.6px;top:334px;font-size:15px;line-height:18px;color:#4d5466"><span style="letter-spacing:-0.060px">Download</span></div>
<div class="t" style="left:756.6px;top:364px;font-size:15px;line-height:18px;color:#f5483b"><span style="letter-spacing:0.008px">Delete</span></div>
<svg class="abs" style="left:738px;top:351px" width="134" height="48" viewBox="0 0 134 48"><rect x="4.95" y="5" width="122.6" height="36.1" fill="none" stroke="#fb0550" stroke-width="5.8"/></svg>
<div class="abs" style="left:1837px;top:221px;width:21px;height:788px;background:#f1f1f1"></div>

<div class="abs" style="left:1839.5px;top:221px;width:16.5px;height:548px;background:#c1c1c1"></div>
<svg class="abs" style="left:1842px;top:993px" width="11" height="7" viewBox="0 0 11 7"><path d="M0.5 0.8 L10.5 0.8 L5.5 6 Z" fill="#505050"/></svg>
<div class="abs" style="left:121px;top:1009px;width:1737px;height:12px;background:#f1f1f1"></div>
<div class="abs" style="left:142.5px;top:1010px;width:1031px;height:11px;background:#c1c1c1"></div>
<svg class="abs" style="left:129px;top:1013.3px" width="6" height="9" viewBox="0 0 6 9"><path d="M5 0 L5 9 L0.3 5.2 Z" fill="#505050"/></svg>
<svg class="abs" style="left:1823px;top:1013.3px" width="6" height="9" viewBox="0 0 6 9"><path d="M1 0 L1 9 L5.7 5.2 Z" fill="#505050"/></svg>
<div class="abs" style="left:1897px;top:74px;width:15px;height:932px;background:#c1c1c1;z-index:6"></div>
<div class="abs" style="left:1895px;top:1006px;width:17px;height:15px;background:#f1f1f1;z-index:6"></div>
<svg class="abs" style="left:1899px;top:61px;z-index:6" width="11" height="7" viewBox="0 0 11 7"><path d="M0.5 6 L10.5 6 L5.5 0.8 Z" fill="#a3a3a3"/></svg>
</body></html>
